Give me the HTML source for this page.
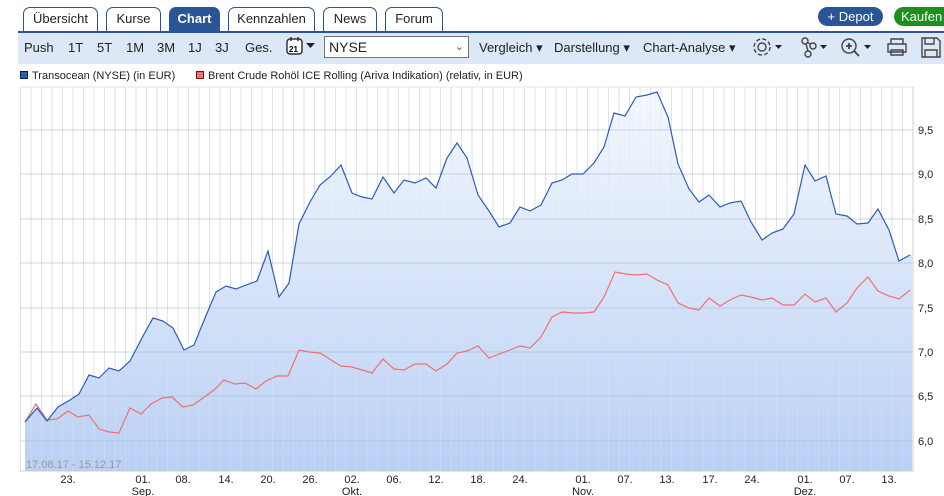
<!DOCTYPE html>
<html><head><meta charset="utf-8"><style>
*{margin:0;padding:0;box-sizing:border-box}
body{width:944px;height:496px;background:#fff;font-family:"Liberation Sans",sans-serif;position:relative;overflow:hidden;color:#222}
.tab{position:absolute;top:7px;height:25px;border:1px solid #2a5597;border-bottom:none;border-radius:7px 7px 0 0;background:#fff;font-size:13px;text-align:center;line-height:22px;color:#222}
.tab.on{background:#2a5597;color:#fff;font-weight:bold}
.bar{position:absolute;left:18px;top:31px;width:926px;height:33px;background:#dce8f8;border-top:2px solid #2a5597}
.t{position:absolute;top:40px;font-size:13px}
.btn{position:absolute;top:7px;height:19px;border-radius:10px;color:#fff;font-size:13px;line-height:19px;text-align:center}
</style></head><body>
<div class="tab" style="left:23px;width:75px">Übersicht</div>
<div class="tab" style="left:106px;width:55px">Kurse</div>
<div class="tab on" style="left:169px;width:51px">Chart</div>
<div class="tab" style="left:228px;width:87px">Kennzahlen</div>
<div class="tab" style="left:323px;width:54px">News</div>
<div class="tab" style="left:385px;width:58px">Forum</div>
<div class="btn" style="left:818px;width:65px;background:#2a5597">+ Depot</div>
<div class="btn" style="left:894px;width:60px;background:#1c8f1c;text-align:left;padding-left:7px">Kaufen</div>
<div class="bar"></div>
<div class="t" style="left:24px">Push</div>
<div class="t" style="left:68px">1T</div>
<div class="t" style="left:97px">5T</div>
<div class="t" style="left:126px">1M</div>
<div class="t" style="left:157px">3M</div>
<div class="t" style="left:188px">1J</div>
<div class="t" style="left:215px">3J</div>
<div class="t" style="left:245px">Ges.</div>
<svg style="position:absolute;left:285px;top:36px" width="36" height="22"><rect x="2" y="3" width="15" height="15" rx="3" fill="#fff" stroke="#333" stroke-width="1.5"/><line x1="6" y1="1" x2="6" y2="5" stroke="#333" stroke-width="1.5"/><line x1="13" y1="1" x2="13" y2="5" stroke="#333" stroke-width="1.5"/><text x="4" y="16" font-size="8" font-weight="bold" font-family="Liberation Sans">21</text><path d="M21 7h9l-4.5 5z" fill="#222"/></svg>
<div style="position:absolute;left:324px;top:36px;width:145px;height:22px;background:#fff;border:1px solid #777;font-size:14px;line-height:20px;padding-left:4px">NYSE<span style="position:absolute;right:4px;top:0;font-size:11px;color:#555">&#8964;</span></div>
<div class="t" style="left:479px">Vergleich ▾</div>
<div class="t" style="left:554px">Darstellung ▾</div>
<div class="t" style="left:643px">Chart-Analyse ▾</div>
<svg style="position:absolute;left:750px;top:34px" width="194" height="26" fill="none" stroke="#444" stroke-width="1.4">
<circle cx="12" cy="13" r="4"/><circle cx="12" cy="13" r="8" stroke-dasharray="4 2.3"/>
<path d="M25 11h7l-3.5 4z" fill="#222" stroke="none"/>
<circle cx="55" cy="7" r="3"/><circle cx="63" cy="12" r="3"/><circle cx="58" cy="20" r="3"/><path d="M56 10l2 7M58 9l3 1"/>
<path d="M70 11h7l-3.5 4z" fill="#222" stroke="none"/>
<circle cx="99" cy="12" r="7"/><path d="M104 17l5 5M96 12h6M99 9v6" stroke-width="1.8"/>
<path d="M114 11h7l-3.5 4z" fill="#222" stroke="none"/>
<path d="M141 10v-5h12v5M138 10h18v8h-18zM141 16h12v5h-12z"/>
<path d="M172 4h15l3 3v16h-18zM175 4v6h9v-6M175 23v-7h12v7"/>
</svg>
<div style="position:absolute;left:20px;top:70px;font-size:11px"><span style="display:inline-block;width:8px;height:8px;background:#2a5cc0;border:1px solid #123;margin-right:4px"></span>Transocean (NYSE) (in EUR)</div>
<div style="position:absolute;left:196px;top:70px;font-size:11px"><span style="display:inline-block;width:8px;height:8px;background:#f56b6b;border:1px solid #622;margin-right:4px"></span>Brent Crude Rohöl ICE Rolling (Ariva Indikation) (relativ, in EUR)</div>
<svg style="position:absolute;left:0;top:0" width="944" height="496">
<defs><linearGradient id="g" x1="0" y1="0" x2="0" y2="1"><stop offset="0" stop-color="#f4f8fe"/><stop offset="1" stop-color="#b9d0f5"/></linearGradient>
<pattern id="vg" x="20" y="0" width="10.5" height="10" patternUnits="userSpaceOnUse"><line x1="0.5" y1="0" x2="0.5" y2="10" stroke="#e2e2e2" stroke-width="1"/></pattern></defs>
<rect x="20" y="87" width="893" height="384" fill="url(#vg)"/>
<line x1="20" y1="87" x2="913" y2="87" stroke="#e4e4e4"/>
<polygon fill="url(#g)" points="25,422 37,408 47,421 58,407 70,400 79,394 89,375 99,378 109,368 119,371 130,361 143,336 153,318 163,321 173,328 184,350 194,345 205,318 216,292 226,286 236,289 246,285 257,281 268,251 279,297 289,283 299,224 310,202 320,185 331,176 341,165 352,193 362,197 372,199 383,177 394,193 404,180 415,183 426,178 436,188 447,158 457,143 467,158 478,195 489,211 499,227 510,223 520,207 530,211 541,205 552,183 562,180 572,174 583,174 594,163 604,147 614,113 625,116 636,97 647,95 657,92 668,117 678,164 689,189 699,202 709,195 720,207 730,203 741,201 751,222 762,240 772,233 783,229 794,214 805,165 815,181 826,176 836,214 847,216 857,224 868,223 878,209 889,230 899,261 910,255 912,254 912,471 25,471"/>
<rect x="20" y="87" width="893" height="384" fill="url(#vg)" opacity="0.4"/>
<g stroke="#a9bcdb" stroke-width="1" opacity="0.6">
<line x1="20" y1="130" x2="913" y2="130"/><line x1="20" y1="174" x2="913" y2="174"/><line x1="20" y1="219" x2="913" y2="219"/><line x1="20" y1="263" x2="913" y2="263"/><line x1="20" y1="308" x2="913" y2="308"/><line x1="20" y1="352" x2="913" y2="352"/><line x1="20" y1="396" x2="913" y2="396"/><line x1="20" y1="441" x2="913" y2="441"/></g>
<line x1="913" y1="87" x2="913" y2="471" stroke="#ccc"/>
<line x1="20" y1="471" x2="913" y2="471" stroke="#ccc"/>
<polyline fill="none" stroke="#f07070" stroke-width="1.2" points="25,422 36,404 47,420 57,419 68,411 78,417 89,415 99,429 109,432 119,433 130,408 141,414 151,404 162,398 172,397 183,407 193,405 203,398 214,390 224,380 235,384 245,383 256,389 266,381 277,376 288,376 299,350 309,352 320,353 331,360 341,366 352,367 362,370 372,373 383,359 394,369 404,370 415,364 426,364 436,371 447,364 457,353 467,351 478,346 489,358 499,354 510,350 520,346 530,348 541,337 552,317 562,312 573,313 583,313 594,312 604,297 615,272 626,274 636,275 647,274 657,280 668,285 678,303 689,308 699,310 709,298 720,306 730,300 741,295 751,297 762,300 772,298 783,305 794,305 805,294 815,302 826,298 836,312 847,303 857,288 868,277 878,291 889,296 899,299 910,290"/>
<polyline fill="none" stroke="#2c5cb8" stroke-width="1.2" points="25,422 37,408 47,421 58,407 70,400 79,394 89,375 99,378 109,368 119,371 130,361 143,336 153,318 163,321 173,328 184,350 194,345 205,318 216,292 226,286 236,289 246,285 257,281 268,251 279,297 289,283 299,224 310,202 320,185 331,176 341,165 352,193 362,197 372,199 383,177 394,193 404,180 415,183 426,178 436,188 447,158 457,143 467,158 478,195 489,211 499,227 510,223 520,207 530,211 541,205 552,183 562,180 572,174 583,174 594,163 604,147 614,113 625,116 636,97 647,95 657,92 668,117 678,164 689,189 699,202 709,195 720,207 730,203 741,201 751,222 762,240 772,233 783,229 794,214 805,165 815,181 826,176 836,214 847,216 857,224 868,223 878,209 889,230 899,261 910,255"/>
<g font-size="11" fill="#222" font-family="Liberation Sans">
<text x="918" y="134">9,5</text><text x="918" y="178">9,0</text><text x="918" y="223">8,5</text><text x="918" y="267">8,0</text><text x="918" y="312">7,5</text><text x="918" y="356">7,0</text><text x="918" y="400">6,5</text><text x="918" y="445">6,0</text>
</g>
<text x="26" y="468" font-size="11" fill="#999" font-family="Liberation Sans">17.08.17 - 15.12.17</text>
<g font-size="11" fill="#222" font-family="Liberation Sans" text-anchor="middle">
<text x="68" y="483">23.</text><text x="143" y="483">01.</text><text x="143" y="495">Sep.</text><text x="183" y="483">08.</text><text x="226" y="483">14.</text><text x="268" y="483">20.</text><text x="310" y="483">26.</text><text x="352" y="483">02.</text><text x="352" y="495">Okt.</text><text x="394" y="483">06.</text><text x="436" y="483">12.</text><text x="478" y="483">18.</text><text x="520" y="483">24.</text><text x="583" y="483">01.</text><text x="583" y="495">Nov.</text><text x="625" y="483">07.</text><text x="667" y="483">13.</text><text x="710" y="483">17.</text><text x="752" y="483">24.</text><text x="805" y="483">01.</text><text x="805" y="495">Dez.</text><text x="847" y="483">07.</text><text x="889" y="483">13.</text>
</g>
</svg>
</body></html>
